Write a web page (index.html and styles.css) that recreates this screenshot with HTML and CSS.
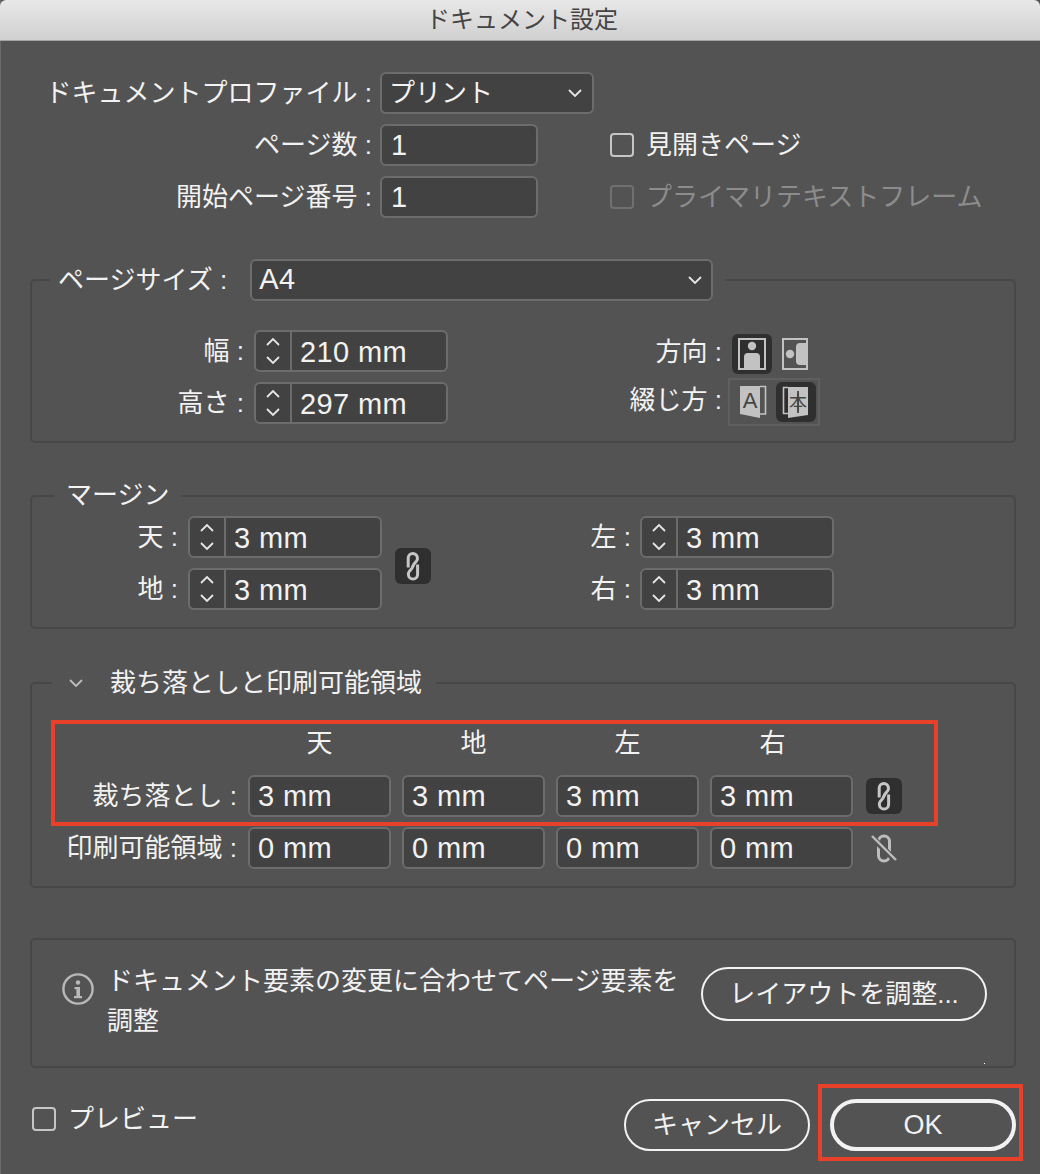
FILE: index.html
```html
<!DOCTYPE html>
<html lang="ja">
<head>
    <meta charset="UTF-8">
    <meta name="viewport" content="width=device-width, initial-scale=1.0">
    <title>ドキュメント設定</title>
    <link rel="stylesheet" href="styles.css">
</head>
<body>
    <svg class="defs" width="0" height="0">
        <symbol id="chev-down" viewBox="0 0 16 10"><path d="M2 2l6 6 6-6" fill="none" stroke="currentColor" stroke-width="1.8"/></symbol>
        <symbol id="chev-up" viewBox="0 0 16 10"><path d="M2 8l6-6 6 6" fill="none" stroke="currentColor" stroke-width="1.8"/></symbol>
        <symbol id="link" viewBox="0 0 36 36">
            <g fill="none" stroke="currentColor" stroke-width="3">
                <path d="M13.2 19.5V10a4.6 4.6 0 0 1 9.2 0v1c0 3-4.6 4-4.6 8"/>
                <path d="M22.6 16.5V26.5a4.6 4.6 0 0 1-9.2 0v-1c0-3 4.6-4 4.6-8"/>
            </g>
        </symbol>
    </svg>

    <div class="titlebar">ドキュメント設定</div>

    <div class="doc-top">
        <div class="row">
            <div class="lbl lbl-top">ドキュメントプロファイル :</div>
            <div class="select select-profile"><span>プリント</span><svg class="chev"><use href="#chev-down"/></svg></div>
        </div>
        <div class="row">
            <div class="lbl lbl-top">ページ数 :</div>
            <div class="input input-count">1</div>
            <label class="check check-facing"><span class="box"></span>見開きページ</label>
        </div>
        <div class="row">
            <div class="lbl lbl-top">開始ページ番号 :</div>
            <div class="input input-count">1</div>
            <label class="check check-facing is-disabled"><span class="box"></span>プライマリテキストフレーム</label>
        </div>
    </div>

    <fieldset class="group group-page">
        <legend class="legend-page">
            <span>ページサイズ :</span>
            <div class="select select-size"><span>A4</span><svg class="chev"><use href="#chev-down"/></svg></div>
        </legend>
        <div class="page-body">
            <div class="col">
                <div class="row">
                    <div class="lbl lbl-page">幅 :</div>
                    <div class="stepper">
                        <div class="arrows"><svg><use href="#chev-up"/></svg><svg><use href="#chev-down"/></svg></div>
                        <div class="value">210 mm</div>
                    </div>
                </div>
                <div class="row">
                    <div class="lbl lbl-page">高さ :</div>
                    <div class="stepper">
                        <div class="arrows"><svg><use href="#chev-up"/></svg><svg><use href="#chev-down"/></svg></div>
                        <div class="value">297 mm</div>
                    </div>
                </div>
            </div>
            <div class="col-orient">
                <div class="orient-row">
                    <div class="lbl lbl-orient">方向 :</div>
                    <div class="icon-btn is-on">
                        <svg width="40" height="40" viewBox="0 0 40 40">
                            <rect x="7" y="5" width="26" height="30" fill="none" stroke="#c2c2c2" stroke-width="2"/>
                            <circle cx="20" cy="12" r="4.2" fill="#c2c2c2"/>
                            <path d="M12 36V23a4 4 0 0 1 4-4h8a4 4 0 0 1 4 4v13z" fill="#c2c2c2"/>
                        </svg>
                    </div>
                    <svg class="icon-land" width="26" height="32" viewBox="0 0 26 32">
                        <rect x="1" y="1" width="24" height="30" fill="none" stroke="#c2c2c2" stroke-width="2"/>
                        <circle cx="8" cy="16" r="4.2" fill="#c2c2c2"/>
                        <path d="M26 5h-8a4 4 0 0 0-4 4v14a4 4 0 0 0 4 4h8z" fill="#c2c2c2"/>
                    </svg>
                </div>
                <div class="orient-row orient-row-bind">
                    <div class="lbl lbl-orient">綴じ方 :</div>
                    <div class="bind-group">
                        <svg class="icon-bind" width="28" height="34" viewBox="0 0 28 34">
                            <path d="M20 1.5h5.5v27.5h-5.5" fill="none" stroke="#c2c2c2" stroke-width="1.6"/>
                            <path d="M0 1h20v32L0 29z" fill="#c2c2c2"/>
                            <text x="10" y="23" class="bind-letter">A</text>
                        </svg>
                        <div class="icon-btn is-on">
                            <svg width="40" height="40" viewBox="0 0 40 40">
                                <path d="M12 5.5H7.5v26H12" fill="none" stroke="#c2c2c2" stroke-width="1.6"/>
                                <path d="M12 5h20v28l-20 3z" fill="#c2c2c2"/>
                                <text x="22" y="27" class="bind-letter bind-letter-small">本</text>
                                <path d="M22 9v22" stroke="#454545" stroke-width="1.8"/>
                            </svg>
                        </div>
                    </div>
                </div>
            </div>
        </div>
    </fieldset>

    <fieldset class="group group-margin">
        <legend class="legend-text legend-margin">マージン</legend>
        <div class="margin-body">
            <div class="col">
                <div class="row">
                    <div class="lbl lbl-margin">天 :</div>
                    <div class="stepper">
                        <div class="arrows"><svg><use href="#chev-up"/></svg><svg><use href="#chev-down"/></svg></div>
                        <div class="value">3 mm</div>
                    </div>
                </div>
                <div class="row">
                    <div class="lbl lbl-margin">地 :</div>
                    <div class="stepper">
                        <div class="arrows"><svg><use href="#chev-up"/></svg><svg><use href="#chev-down"/></svg></div>
                        <div class="value">3 mm</div>
                    </div>
                </div>
            </div>
            <div class="link-btn link-btn-margin"><svg width="36" height="36"><use href="#link"/></svg></div>
            <div class="col col-margin-right">
                <div class="row">
                    <div class="lbl lbl-margin-r">左 :</div>
                    <div class="stepper">
                        <div class="arrows"><svg><use href="#chev-up"/></svg><svg><use href="#chev-down"/></svg></div>
                        <div class="value">3 mm</div>
                    </div>
                </div>
                <div class="row">
                    <div class="lbl lbl-margin-r">右 :</div>
                    <div class="stepper">
                        <div class="arrows"><svg><use href="#chev-up"/></svg><svg><use href="#chev-down"/></svg></div>
                        <div class="value">3 mm</div>
                    </div>
                </div>
            </div>
        </div>
    </fieldset>

    <fieldset class="group group-bleed">
        <legend class="legend-text legend-bleed">
            <svg class="legend-chev"><use href="#chev-down"/></svg>裁ち落としと印刷可能領域
        </legend>
        <div class="bleed-grid">
            <div class="highlight"></div>
            <div></div>
            <div class="col-head">天</div>
            <div class="col-head">地</div>
            <div class="col-head">左</div>
            <div class="col-head col-head-last">右</div>
            <div></div>

            <div class="lbl">裁ち落とし :</div>
            <div class="input">3 mm</div>
            <div class="input">3 mm</div>
            <div class="input">3 mm</div>
            <div class="input">3 mm</div>
            <div class="link-btn"><svg width="36" height="36"><use href="#link"/></svg></div>

            <div class="lbl">印刷可能領域 :</div>
            <div class="input">0 mm</div>
            <div class="input">0 mm</div>
            <div class="input">0 mm</div>
            <div class="input">0 mm</div>
            <div class="link-off">
                <svg width="36" height="36" viewBox="0 0 36 36">
                    <rect x="12.5" y="6" width="11" height="25" rx="5.5" fill="none" stroke="#bdbdbd" stroke-width="3"/>
                    <path d="M5 6l25 25" stroke="#535353" stroke-width="6"/>
                    <path d="M6 6l24 24" stroke="#bdbdbd" stroke-width="2.4"/>
                </svg>
            </div>
        </div>
    </fieldset>

    <div class="notice">
        <svg class="info" width="32" height="32" viewBox="0 0 32 32">
            <circle cx="16" cy="16" r="14.6" fill="none" stroke="#b9b9b9" stroke-width="2.4"/>
            <circle cx="16" cy="9.5" r="2.2" fill="#b9b9b9"/>
            <path d="M12.5 14h5.5v9h2v2.2h-8V23h2.4v-6.8h-1.9z" fill="#b9b9b9"/>
        </svg>
        <p class="notice-text">ドキュメント要素の変更に合わせてページ要素を<br>調整</p>
        <button class="btn btn-layout">レイアウトを調整...</button>
    </div>

    <div class="footer">
        <label class="check check-preview"><span class="box"></span>プレビュー</label>
        <div class="footer-buttons">
            <button class="btn btn-cancel">キャンセル</button>
            <div class="ok-wrap"><button class="btn btn-ok">OK</button></div>
        </div>
    </div>
</body>
</html>
```

FILE: styles.css
```css
*, *::after {
    box-sizing: border-box;
}
html, body {
    margin: 0;
    padding: 0;
}
body {
    width: 1040px;
    height: 1174px;
    overflow: hidden;
    background-color: #535353;
    box-shadow: inset 1px 0 0 #6a6a6a;
    color: #f2f2f2;
    font-family: "Liberation Sans", "Noto Sans CJK JP", sans-serif;
    font-size: 26px;
    line-height: 40px;
}
.defs {
    position: absolute;
}
.titlebar {
    height: 41px;
    padding-left: 4px;
    background: linear-gradient(#e8e8e8, #d0d0d0);
    border-bottom: 1px solid #a6a6a6;
    border-radius: 6px 6px 0 0;
    color: #444;
    font-size: 24px;
    line-height: 40px;
    text-align: center;
}

.row {
    display: flex;
    align-items: center;
    height: 42px;
}
.col {
    display: flex;
    flex-direction: column;
    gap: 10px;
}
.lbl {
    text-align: right;
    white-space: nowrap;
}

/* inputs */
.input, .select, .stepper {
    height: 42px;
    background-color: #424242;
    border: 2px solid #6c6c6c;
    border-radius: 6px;
    font-size: 29px;
    letter-spacing: 0.4px;
    line-height: 38px;
    white-space: nowrap;
}
.input {
    padding-left: 8px;
}
.select {
    display: flex;
    align-items: center;
    justify-content: space-between;
    padding: 0 9px 0 7px;
}
.select span {
    font-size: 26px;
    letter-spacing: 0;
}
.chev {
    width: 16px;
    height: 10px;
    color: #e6e6e6;
}
.stepper {
    display: flex;
    width: 194px;
}
.arrows {
    width: 36px;
    border-right: 2px solid #6c6c6c;
    display: flex;
    flex-direction: column;
    align-items: center;
    justify-content: center;
    gap: 8px;
    color: #e6e6e6;
}
.arrows svg {
    width: 16px;
    height: 10px;
}
.value {
    padding: 1px 0 0 8px;
}

/* top part */
.doc-top {
    display: flex;
    flex-direction: column;
    gap: 10px;
    padding-top: 31px;
}
.lbl-top {
    width: 372px;
    margin-right: 8px;
}
.select-profile {
    width: 214px;
}
.input-count {
    width: 158px;
    padding-left: 9px;
}
.check {
    display: flex;
    align-items: center;
    gap: 12px;
    white-space: nowrap;
}
.box {
    width: 24px;
    height: 24px;
    border: 2px solid #c6c6c6;
    border-radius: 4px;
}
.check-facing {
    margin-left: 72px;
}
.is-disabled {
    color: #8c8c8c;
}
.is-disabled .box {
    border-color: #707070;
}

/* groups */
.group {
    margin: 0 24px 0 30px;
    min-width: 0;
    padding: 0;
    border: 2px solid #474747;
    border-radius: 5px;
}
.group-page {
    margin-top: 41px;
    height: 184px;
}
.group-margin {
    margin-top: 37px;
}
.group-bleed {
    margin-top: 39px;
}
.legend-page {
    display: flex;
    align-items: center;
    margin-left: 18px;
    padding: 0 12px 0 8px;
}
.select-size {
    width: 463px;
    margin-left: 23px;
    padding-right: 8px;
}
.select-size span {
    padding-bottom: 2px;
    font-size: 29px;
    letter-spacing: 0.4px;
}
.legend-text {
    height: 30px;
    line-height: 30px;
    white-space: nowrap;
}
.legend-margin {
    height: 32px;
    margin-left: 22px;
    padding: 0 12px;
}
.legend-bleed {
    display: flex;
    align-items: center;
    margin-left: 20px;
    padding: 0 14px 0 16px;
}
.legend-chev {
    width: 16px;
    height: 10px;
    margin-right: 26px;
    color: #bdbdbd;
}

/* page size */
.page-body {
    display: flex;
    padding-top: 29px;
}
.lbl-page {
    width: 212px;
    margin-right: 10px;
}
.col-orient {
    display: flex;
    flex-direction: column;
    margin-left: 174px;
    padding-top: 4px;
}
.orient-row {
    display: flex;
    align-items: center;
    height: 40px;
}
.orient-row-bind {
    height: 48px;
    margin-top: 4px;
}
.lbl-orient {
    width: 100px;
    margin-right: 10px;
    margin-bottom: 4px;
}
.orient-row-bind .lbl-orient {
    margin-right: 6px;
}
.icon-btn {
    width: 40px;
    height: 40px;
    background-color: #2f2f2f;
    border-radius: 6px;
}
.icon-btn svg, .link-btn svg, .link-off svg {
    display: block;
}
.icon-land {
    margin-left: 10px;
}
.bind-group {
    display: flex;
    align-items: center;
    justify-content: space-between;
    width: 92px;
    height: 48px;
    padding: 0 2px 0 10px;
    border: 2px solid #5f5f5f;
}
.icon-bind {
    flex: none;
}
.bind-letter {
    fill: #454545;
    font-size: 22px;
    text-anchor: middle;
}
.bind-letter-small {
    font-size: 18px;
}

/* margin */
.margin-body {
    display: flex;
    align-items: center;
    padding: 4px 0 17px;
}
.lbl-margin {
    width: 146px;
    margin-right: 10px;
}
.link-btn {
    width: 36px;
    height: 36px;
    background-color: #2f2f2f;
    border-radius: 6px;
    color: #c6c6c6;
}
.link-btn-margin {
    margin: 6px 0 0 13px;
}
.col-margin-right {
    margin-left: 150px;
}
.lbl-margin-r {
    width: 50px;
    margin-right: 9px;
}

/* bleed */
.bleed-grid {
    position: relative;
    display: grid;
    grid-template-columns: 205px repeat(4, 143px) 36px;
    grid-template-rows: 37px 42px 42px;
    column-gap: 11px;
    row-gap: 10px;
    align-items: center;
    padding-bottom: 17px;
    margin-top: 30px;
}
.highlight {
    position: absolute;
    top: -8px;
    left: 19px;
    width: 887px;
    height: 106px;
    border: 4px solid #e8412a;
}
.col-head {
    align-self: start;
    height: 30px;
    line-height: 30px;
    text-align: center;
}
.col-head-last {
    padding-right: 18px;
}
.bleed-grid .link-btn, .link-off {
    margin-left: 2px;
}

/* notice */
.notice {
    position: relative;
    display: flex;
    align-items: flex-start;
    height: 130px;
    margin: 50px 24px 0 30px;
    padding: 21px 0 0 30px;
    border: 2px solid #474747;
    border-radius: 5px;
}
.notice::after {
    content: "";
    position: absolute;
    right: 29px;
    bottom: 2px;
    width: 1px;
    height: 1px;
    background-color: #fff;
}
.info {
    flex: none;
    margin-top: 12px;
}
.notice-text {
    width: 580px;
    margin: 0 0 0 13px;
    line-height: 40px;
}
.btn {
    height: 52px;
    padding: 0 0 6px;
    background: none;
    border: 2px solid #f2f2f2;
    border-radius: 26px;
    color: #f2f2f2;
    font-family: inherit;
    font-size: 26px;
}
.btn-layout {
    width: 286px;
    height: 54px;
    margin: 6px 0 0 14px;
    border-radius: 27px;
}

/* footer */
.footer {
    display: flex;
    justify-content: space-between;
    margin-top: 31px;
    padding: 0 24px 0 32px;
}
.check-preview {
    align-self: flex-start;
    height: 40px;
}
.footer-buttons {
    display: flex;
    gap: 20px;
}
.btn-cancel {
    width: 186px;
}
.ok-wrap {
    position: relative;
}
.ok-wrap::after {
    content: "";
    position: absolute;
    top: -15px;
    left: -12px;
    width: 205px;
    height: 77px;
    border: 4px solid #e8412a;
}
.btn-ok {
    display: block;
    width: 186px;
    padding-bottom: 0;
    border-width: 4px;
    font-size: 27px;
}
```
